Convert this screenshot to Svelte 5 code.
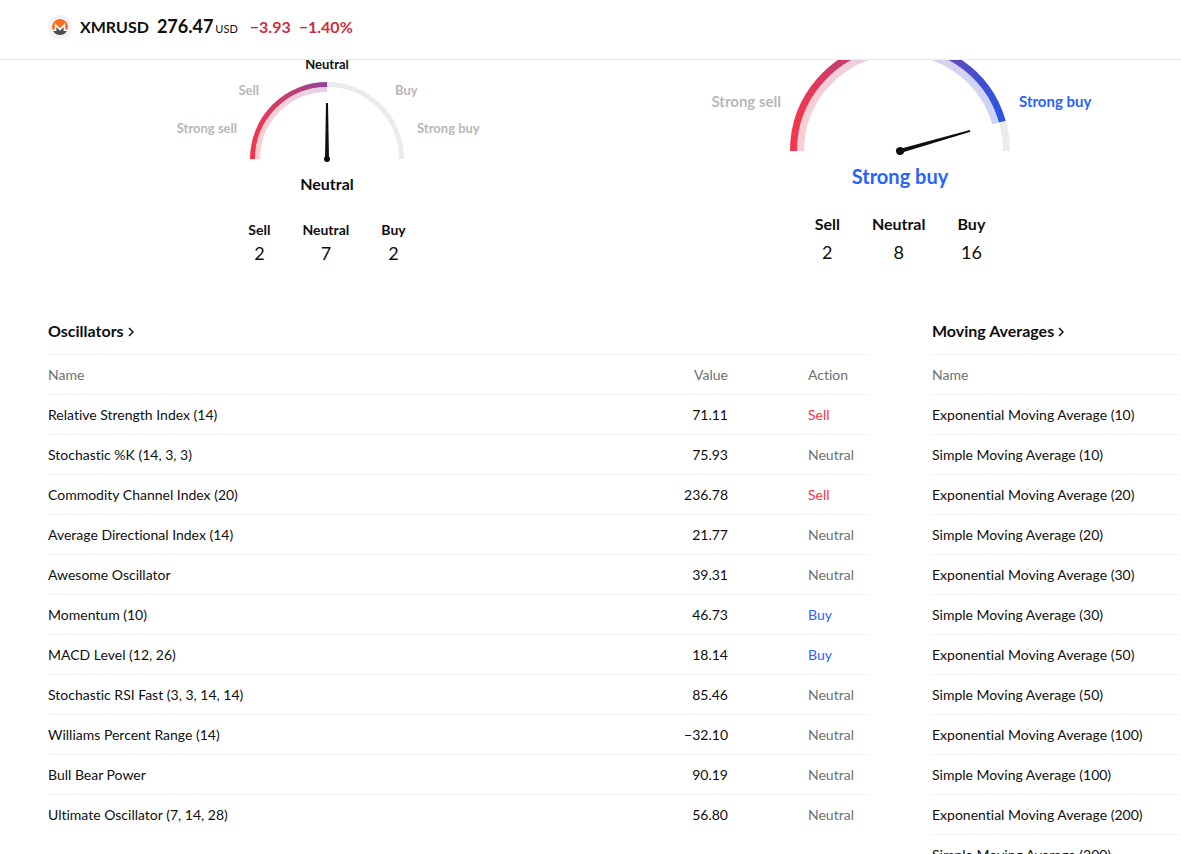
<script lang="ts">
  type Gauge = {
    id: string;
    size: 'small' | 'large';
    radius: number;
    thickness: number;
    needle: number;
    pivot: number;
    angle: number;
    verdict: string;
    labels: { text: string; x: number; y: number; anchor: 'start' | 'middle' | 'end' }[];
    counts: { name: string; value: number }[];
  };

  const symbol = { name: 'XMRUSD', price: '276.47', currency: 'USD', change: '−3.93', percent: '−1.40%' };

  // angle is measured from the right end of the dial, in degrees
  const gauges: Gauge[] = [
    {
      id: 'oscillators',
      size: 'small',
      radius: 77,
      thickness: 5,
      needle: 56,
      pivot: 3,
      angle: 90,
      verdict: 'Neutral',
      labels: [
        { text: 'Strong sell', x: -90, y: -26, anchor: 'end' },
        { text: 'Sell', x: -68, y: -64, anchor: 'end' },
        { text: 'Neutral', x: 0, y: -90, anchor: 'middle' },
        { text: 'Buy', x: 68, y: -64, anchor: 'start' },
        { text: 'Strong buy', x: 90, y: -26, anchor: 'start' }
      ],
      counts: [
        { name: 'Sell', value: 2 },
        { name: 'Neutral', value: 7 },
        { name: 'Buy', value: 2 }
      ]
    },
    {
      id: 'summary',
      size: 'large',
      radius: 110,
      thickness: 7,
      needle: 73,
      pivot: 4,
      angle: 16,
      verdict: 'Strong buy',
      labels: [
        { text: 'Strong sell', x: -119, y: -44, anchor: 'end' },
        { text: 'Strong buy', x: 119, y: -44, anchor: 'start' }
      ],
      counts: [
        { name: 'Sell', value: 2 },
        { name: 'Neutral', value: 8 },
        { name: 'Buy', value: 16 }
      ]
    }
  ];

  const oscillators = [
    { name: 'Relative Strength Index (14)', value: '71.11', action: 'Sell' },
    { name: 'Stochastic %K (14, 3, 3)', value: '75.93', action: 'Neutral' },
    { name: 'Commodity Channel Index (20)', value: '236.78', action: 'Sell' },
    { name: 'Average Directional Index (14)', value: '21.77', action: 'Neutral' },
    { name: 'Awesome Oscillator', value: '39.31', action: 'Neutral' },
    { name: 'Momentum (10)', value: '46.73', action: 'Buy' },
    { name: 'MACD Level (12, 26)', value: '18.14', action: 'Buy' },
    { name: 'Stochastic RSI Fast (3, 3, 14, 14)', value: '85.46', action: 'Neutral' },
    { name: 'Williams Percent Range (14)', value: '−32.10', action: 'Neutral' },
    { name: 'Bull Bear Power', value: '90.19', action: 'Neutral' },
    { name: 'Ultimate Oscillator (7, 14, 28)', value: '56.80', action: 'Neutral' }
  ];

  const averages = [10, 20, 30, 50, 100, 200].flatMap((n) => [
    `Exponential Moving Average (${n})`,
    `Simple Moving Average (${n})`
  ]);

  function arc(r: number, from: number, to: number) {
    const rad = Math.PI / 180;
    const x1 = r * Math.cos(from * rad);
    const y1 = -r * Math.sin(from * rad);
    const x2 = r * Math.cos(to * rad);
    const y2 = -r * Math.sin(to * rad);
    return `M${x1} ${y1} A${r} ${r} 0 0 1 ${x2} ${y2}`;
  }
</script>

<div class="page">
  <header>
    <svg class="logo" viewBox="0 0 24 24" width="24" height="24" aria-hidden="true">
      <circle cx="12" cy="12" r="12" fill="#f0f3fa" />
      <circle cx="12" cy="12" r="8" fill="#fff" />
      <path d="M12 4a8 8 0 0 0-7.6 10.5h2.4V8.1l5.2 5.2 5.2-5.2v6.4h2.4A8 8 0 0 0 12 4Z" fill="#ff6b1a" />
      <path d="M10.8 14.5 8.4 12v4H5.1a8 8 0 0 0 13.8 0h-3.3v-4l-2.4 2.5L12 15.7Z" fill="#4c4c4c" />
    </svg>
    <h1>{symbol.name}</h1>
    <span class="price">{symbol.price}<small>{symbol.currency}</small></span>
    <span class="change">{symbol.change}</span>
    <span class="change">{symbol.percent}</span>
  </header>

  <main>
    <section class="gauges">
      {#each gauges as g (g.id)}
        <div class="gauge {g.size}">
          <svg class="dial" viewBox="-200 -140 400 145" width="400" height="145">
            <defs>
              <linearGradient id="{g.id}-fill" gradientUnits="userSpaceOnUse" x1={-g.radius} x2={g.radius} y1="0" y2="0">
                <stop offset="0" stop-color="#f7364a" />
                <stop offset="1" stop-color="#2553e6" />
              </linearGradient>
            </defs>
            <g fill="none" stroke-width={g.thickness}>
              <path d={arc(g.radius - g.thickness / 2, g.angle, 0)} stroke="#ebebeb" />
              <path d={arc(g.radius - g.thickness * 1.5, 180, g.angle)} stroke="url(#{g.id}-fill)" opacity="0.25" />
              <path d={arc(g.radius - g.thickness / 2, 180, g.angle)} stroke="url(#{g.id}-fill)" />
            </g>
            <g fill="#0f0f0f" transform="rotate({-g.angle})">
              <path d="M0 -2 L{g.needle} -1 V1 L0 2Z" />
              <circle r={g.pivot} />
            </g>
            {#each g.labels as label}
              <text
                x={label.x}
                y={label.y}
                text-anchor={label.anchor}
                class:neutral={label.text === g.verdict && label.text === 'Neutral'}
                class:buy={label.text === g.verdict && label.text.endsWith('buy')}
              >{label.text}</text>
            {/each}
          </svg>
          <div class="verdict" class:buy={g.verdict.endsWith('buy')}>{g.verdict}</div>
          <dl>
            {#each g.counts as count}
              <div>
                <dt>{count.name}</dt>
                <dd>{count.value}</dd>
              </div>
            {/each}
          </dl>
        </div>
      {/each}
    </section>

    <section class="tables">
      <div>
        <h2>
          <a href="#oscillators">Oscillators
            <svg viewBox="0 0 6 10" width="6" height="10" aria-hidden="true"><path d="m1 1 4 4-4 4" /></svg>
          </a>
        </h2>
        <table>
          <thead>
            <tr><th>Name</th><th class="value">Value</th><th class="action">Action</th></tr>
          </thead>
          <tbody>
            {#each oscillators as row}
              <tr>
                <td>{row.name}</td>
                <td class="value">{row.value}</td>
                <td class="action {row.action.toLowerCase()}">{row.action}</td>
              </tr>
            {/each}
          </tbody>
        </table>
      </div>
      <div>
        <h2>
          <a href="#moving-averages">Moving Averages
            <svg viewBox="0 0 6 10" width="6" height="10" aria-hidden="true"><path d="m1 1 4 4-4 4" /></svg>
          </a>
        </h2>
        <table>
          <thead>
            <tr><th>Name</th></tr>
          </thead>
          <tbody>
            {#each averages as name}
              <tr><td>{name}</td></tr>
            {/each}
          </tbody>
        </table>
      </div>
    </section>
  </main>
</div>

<style>
  :global(body) {
    background: #fff;
    color: #0f0f0f;
    font-family: 'Trebuchet MS', Lato, 'Open Sans', sans-serif;
    font-size: 14px;
    font-variant-ligatures: none;
  }
  .page {
    display: flex;
    flex-direction: column;
    height: 100vh;
    overflow: hidden;
  }
  header {
    display: flex;
    align-items: baseline;
    gap: 8px;
    flex: none;
    padding: 14px 48px 20px;
    border-bottom: 1px solid #ebebeb;
    line-height: 24px;
  }
  .logo {
    align-self: center;
  }
  h1,
  .price {
    margin: 0;
    font-size: 16px;
    font-weight: 700;
  }
  .price {
    margin-right: 4px;
    font-size: 18px;
  }
  .price small {
    margin-left: 2px;
    font-size: 11px;
    font-weight: 400;
    line-height: 1;
  }
  .change {
    color: #cc2f3c;
    font-size: 16px;
    font-weight: 700;
  }
  main {
    flex: 1;
    min-height: 0;
    overflow: hidden;
  }
  /* the dials are partly scrolled under the header */
  .gauges {
    display: grid;
    grid-template-columns: 1fr 1fr;
    gap: 15px;
    align-items: start;
    margin-top: -49px;
    padding: 0 2px 0 48px;
  }
  .gauge {
    display: flex;
    flex-direction: column;
    align-items: center;
  }
  .gauge.small {
    padding-top: 8px;
  }
  .dial text {
    fill: #b8b8b8;
    font-size: 15px;
    font-weight: 700;
  }
  .small .dial text {
    font-size: 13px;
  }
  .dial text.neutral {
    fill: #0f0f0f;
  }
  .dial text.buy {
    fill: #2962ff;
  }
  .verdict {
    margin-top: 6px;
    font-size: 20px;
    font-weight: 700;
    line-height: 28px;
  }
  .small .verdict {
    margin-top: 8px;
    font-size: 16px;
    line-height: 24px;
  }
  .verdict.buy {
    color: #2962ff;
  }
  dl {
    display: flex;
    gap: 32px;
    margin: 22px 0 0;
    text-align: center;
  }
  dt {
    margin-bottom: 4px;
    font-size: 16px;
    font-weight: 700;
    line-height: 24px;
  }
  dd {
    margin: 0;
    font-size: 18px;
    line-height: 24px;
  }
  .small dl {
    margin-top: 24px;
  }
  .small dt {
    margin-bottom: 1px;
    font-size: 14px;
    line-height: 20px;
  }
  .tables {
    display: grid;
    grid-template-columns: 820fr 248fr;
    gap: 64px;
    margin-top: 54px;
    padding: 0 1px 0 48px;
  }
  h2 {
    margin: 0 0 11px;
    font-size: 16px;
    line-height: 24px;
  }
  h2 a {
    color: inherit;
    text-decoration: none;
  }
  h2 path {
    fill: none;
    stroke: #0f0f0f;
    stroke-width: 1.5;
  }
  table {
    width: 100%;
    border-collapse: collapse;
    white-space: nowrap;
  }
  th,
  td {
    height: 39px;
    padding: 0;
    border-top: 1px solid #f0f0f0;
    text-align: left;
    font-weight: 400;
  }
  th {
    color: #707070;
  }
  .value {
    text-align: right;
  }
  .action {
    width: 60px;
    padding-left: 80px;
  }
  .action.sell {
    color: #f23645;
  }
  .action.neutral {
    color: #707070;
  }
  .action.buy {
    color: #2962ff;
  }
</style>
